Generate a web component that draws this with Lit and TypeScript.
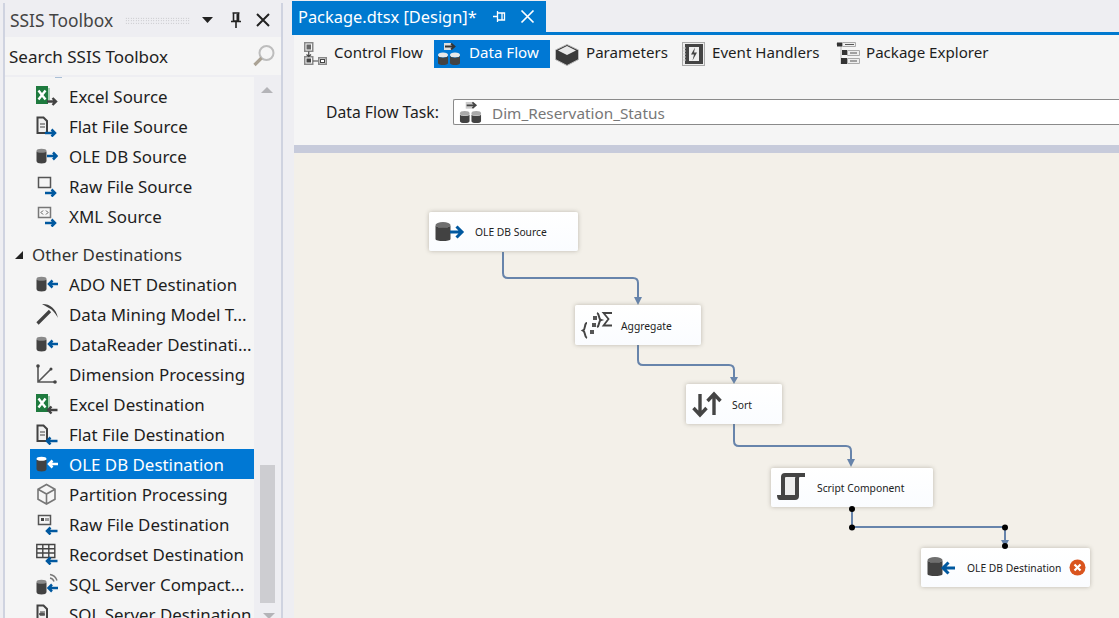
import { LitElement, html, css, svg } from "lit";
import { customElement } from "lit/decorators.js";

const DK = "#424242";
const BL = "#00589f";

const arrowL = (c = BL) => svg`<path d="M22 11H13M16.500 7.500L13 11l3.500 3.500" fill="none" stroke="${c}" stroke-width="2.500"/>`;
const arrowRlow = svg`<path d="M9 18h10M15.500 14.500L19 18l-3.500 3.500" fill="none" stroke="${BL}" stroke-width="2.500"/>`;
const arrowLlow = svg`<path d="M21.500 18H11M14.500 14.500L11 18l3.500 3.500" fill="none" stroke="${BL}" stroke-width="2.500"/>`;
const cyl = (sel = false) => svg`<ellipse cx="5.500" cy="6" rx="5" ry="2.300" fill="${sel ? "#fff" : "#8a8a8a"}"/><path d="M.5 6.500V16c0 1.700 2.200 2.500 5 2.500s5-.8 5-2.500V6.500c-1 1.800-9 1.800-10 0z" fill="${DK}"/>`;
const excel = svg`<rect x="0" y="1" width="12" height="18" fill="#1e7a3e"/><path d="M2.500 5.500l7 9M9.500 5.500l-7 9" stroke="#fff" stroke-width="2.400"/><rect x="12" y="3" width="2" height="12" fill="#a9cfb4"/>`;
const flat = svg`<path d="M1.500 2.500h6l3.500 3.500v12H1.500z" fill="#f0f0f0" stroke="${DK}" stroke-width="2"/><path d="M4 9h5M4 12h5" stroke="${DK}" stroke-width="1.200"/>`;

const icons: Record<string, unknown> = {
  excelS: svg`${excel}<path d="M11 16.500h9M16.500 13l3.500 3.500-3.500 3.500" fill="none" stroke="${DK}" stroke-width="2.400"/>`,
  flatS: svg`${flat}${arrowRlow}`,
  oleS: svg`${cyl()}<path d="M11 11h9.500M17 7.500l3.500 3.500-3.500 3.500" fill="none" stroke="${BL}" stroke-width="2.500"/>`,
  rawS: svg`<path d="M2.500 2.500h12v10h-12z" fill="#f5f5f5" stroke="#555" stroke-width="1.500"/>${arrowRlow}`,
  xmlS: svg`<path d="M2.500 2.500h12v10h-12z" fill="#f5f5f5" stroke="#777" stroke-width="1.500"/><path d="M7 5.500l-2 2 2 2M10 5.500l2 2-2 2" fill="none" stroke="#555"/>${arrowRlow}`,
  ado: svg`${cyl()}${arrowL()}`,
  mine: svg`<path d="M1.500 20.500L14 8" stroke="${DK}" stroke-width="3.200"/><path d="M6 1c7-.5 14 4 16 14-1.500-3-5-8.500-10-10.500z" fill="${DK}"/>`,
  dim: svg`<path d="M2 3v16h17M2.500 18.500L15 6" fill="none" stroke="#555" stroke-width="1.600"/><circle cx="2" cy="3" r="1.800" fill="#444"/><circle cx="19" cy="19" r="1.800" fill="#444"/><circle cx="15" cy="6" r="1.500" fill="#444"/>`,
  excelD: svg`${excel}<path d="M21.500 17H12M15.500 13.500L12 17l3.500 3.500" fill="none" stroke="${DK}" stroke-width="2.400"/>`,
  flatD: svg`${flat}${arrowLlow}`,
  oleD: svg`${cyl(true)}<path d="M22 11H13M16.500 7.500L13 11l3.500 3.500" fill="none" stroke="#fff" stroke-width="2.500"/>`,
  part: svg`<path d="M10.500 1.500l8.500 4.700v10L10.500 21 2 16.200v-10zM2 6.200l8.500 4.800 8.500-4.800M10.500 11v10" fill="#f5f5f5" stroke="#777" stroke-width="1.600"/>`,
  rawD: svg`<path d="M2.500 2.500h12v9h-12z" fill="#f5f5f5" stroke="#555" stroke-width="1.500"/><path d="M5 5h3v3H5zM9.500 5h1v3h-1zM11.500 5h1v3h-1z" fill="#444"/>${arrowLlow}`,
  rec: svg`<path d="M.8 1.500h18v13H.8zM.8 5.800h18M.8 10h18M6.800 1.500v13M12.800 1.500v13" fill="#f5f5f5" stroke="#444" stroke-width="1.400"/>${arrowLlow}`,
  sqlC: svg`<g transform="translate(0 3)">${cyl()}</g><path d="M22 15H12.500M16 11.500L12.500 15l3.500 3.500" fill="none" stroke="${BL}" stroke-width="2.500"/><path d="M14 1.500a9 9 0 0 1 7 6M14 5a5 5 0 0 1 4 3.500" fill="none" stroke="#777" stroke-width="1.400"/>`,
  sqlD: svg`${flat}<ellipse cx="6" cy="11" rx="3" ry="1.500" fill="#555"/>`,
};

const ctrl = svg`<g fill="none" stroke="#888" stroke-width="1.500"><rect x="1.750" y=".75" width="8" height="8.500" fill="#f5f5f5"/><rect x="3.500" y="2.500" width="4.500" height="5" fill="#666" stroke="none"/><rect x="1.750" y="14.750" width="8" height="7.500" fill="#f5f5f5"/><rect x="3.500" y="16.500" width="4.500" height="4" fill="#444" stroke="none"/><rect x="15.750" y="15.750" width="7.500" height="6.500" fill="#f5f5f5"/><rect x="17.500" y="17.500" width="4" height="3" fill="#fff" stroke="#444" stroke-width="1"/><path d="M5.750 9.500v5M3.500 12.500l2.250 2 2.250-2M10 19h5" stroke="#444" stroke-width="1.200"/></g>`;
const dflow = svg`<path d="M7 1h8v7H7z" fill="#ddd"/><path d="M8 4.500h9M14 1.500l3.500 3-3.500 3" fill="none" stroke="#333" stroke-width="1.800"/><ellipse cx="6" cy="13" rx="5" ry="2.500" fill="#e8e8e8"/><path d="M1 14v7c0 2.700 10 2.700 10 0v-7c-1 2.200-9 2.200-10 0z" fill="${DK}"/><ellipse cx="18" cy="13" rx="5" ry="2.500" fill="#e8e8e8"/><path d="M13 14v7c0 2.700 10 2.700 10 0v-7c-1 2.200-9 2.200-10 0z" fill="${DK}"/>`;
const dtask = svg`<path d="M7 1h8v7H7z" fill="#ccc"/><path d="M8 4.500h9M14 1.500l3.500 3-3.500 3" fill="none" stroke="#444" stroke-width="1.800"/><ellipse cx="6" cy="13" rx="5" ry="2.500" fill="#aaa"/><path d="M1 14v7c0 2.700 10 2.700 10 0v-7c-1 2.200-9 2.200-10 0z" fill="${DK}"/><ellipse cx="18" cy="13" rx="5" ry="2.500" fill="#aaa"/><path d="M13 14v7c0 2.700 10 2.700 10 0v-7c-1 2.200-9 2.200-10 0z" fill="${DK}"/>`;
const params = svg`<path d="M12 2.500l11.500 5.500v9.500L12 23.500.5 17.500V8z" fill="#3a3a3a" stroke="#bbb"/><path d="M12 4L21 8.500 12 13 3 8.500z" fill="#e8e8e8"/>`;
const evt = svg`<rect x=".5" y=".5" width="22" height="23" fill="#eee" stroke="#aaa"/><rect x="3" y="2" width="18" height="20" fill="#444"/><rect x="7" y="5" width="10" height="14" fill="#eee"/><path d="M13 5.500L9 12.500h3l-1.500 6 4.500-8h-3z" fill="#444"/><path d="M1 6h3M1 9h3M1 12h3M1 15h3M1 18h3" stroke="#ccc"/>`;
const expl = svg`<path d="M0 2h6M5 2v20" stroke="#bbb" fill="none"/><rect x="1" y=".5" width="5" height="4" fill="#333"/><path d="M6.500 .5h13v4h-13z" fill="#eee" stroke="#aaa"/><path d="M9 2.500h9" stroke="#555"/><rect x="6" y="8" width="5" height="5" fill="#333"/><path d="M11.500 8.500h12v5h-12z" fill="#eee" stroke="#aaa"/><path d="M14 11h7" stroke="#555"/><rect x="5" y="16" width="6" height="6" fill="#333"/><path d="M11.500 16.500h12v5h-12z" fill="#eee" stroke="#aaa"/><path d="M14 19h7" stroke="#555"/>`;

const group1 = [["excelS", "Excel Source"], ["flatS", "Flat File Source"], ["oleS", "OLE DB Source"], ["rawS", "Raw File Source"], ["xmlS", "XML Source"]];
const group2 = [["ado", "ADO NET Destination"], ["mine", "Data Mining Model T..."], ["ado", "DataReader Destinati..."], ["dim", "Dimension Processing"], ["excelD", "Excel Destination"], ["flatD", "Flat File Destination"], ["oleD", "OLE DB Destination"], ["part", "Partition Processing"], ["rawD", "Raw File Destination"], ["rec", "Recordset Destination"], ["sqlC", "SQL Server Compact..."], ["sqlD", "SQL Server Destination"]];

const nodes = [
  { x: 429, y: 212, w: 149, h: 39, t: 13, label: "OLE DB Source", ic: svg`<ellipse cx="9" cy="8" rx="7.500" ry="3" fill="#6f6f6f"/><path d="M1.500 8.500V22c0 2.700 15 2.700 15 0V8.500c-2 3-13 3-15 0z" fill="${DK}"/><path d="M16 15h12M22.500 9.500L28 15l-5.500 5.500" fill="none" stroke="#00589f" stroke-width="3"/>`, err: false },
  { x: 575, y: 305, w: 126, h: 40, t: 14, label: "Aggregate", ic: svg`<path d="M7 13c-3 0-1 6-4 7.500 3 1.500 1 6.500 4 7.500M17 3c3 1 1 6 4 7-3 1-1 6-4 7" fill="none" stroke="#444" stroke-width="2"/><rect x="13" y="6" width="4" height="4" fill="#555"/><rect x="12" y="13" width="4" height="4" fill="#555"/><rect x="10" y="20" width="4" height="4" fill="#555"/><path d="M32 3H23.500l5 6-5 6.500H32" fill="none" stroke="#444" stroke-width="1.800"/>`, err: false },
  { x: 686, y: 384, w: 96, h: 40, t: 14, label: "Sort", ic: svg`<path d="M9 5v21M2.500 19l6.500 7 6.500-7M23 26V5M16.500 12L23 5l6.500 7" fill="none" stroke="#444" stroke-width="3.400"/>`, err: false },
  { x: 771, y: 468, w: 162, h: 39, t: 13, label: "Script Component", ic: svg`<path d="M7 3h16v20H7z" fill="#eee"/><path d="M5 22V4q0-4 4-4h20v4h-5q-1 0-1 1v18q0 4-4 4H4q-3 0-3-5zM9 5v17h10V5q0-1 1-1H10q-1 0-1 1z" fill="#444" fill-rule="evenodd"/>`, err: false },
  { x: 921, y: 548, w: 169, h: 39, t: 13, label: "OLE DB Destination", ic: svg`<ellipse cx="9" cy="7" rx="7.500" ry="3" fill="#6f6f6f"/><path d="M1.500 7.500V21c0 2.700 15 2.700 15 0V7.500c-2 3-13 3-15 0z" fill="${DK}"/><path d="M29 15H17M22.500 9.500L17 15l5.500 5.500" fill="none" stroke="#00589f" stroke-width="3"/>`, err: true },
];

@customElement("app-root")
export class AppRoot extends LitElement {
  static styles = css`
    :host { display: block; width: 1119px; height: 618px; overflow: hidden; background: #eeeef2; font-family: "Noto Sans", "Open Sans", sans-serif; color: #1e1e1e; }
    .page { display: grid; grid-template-columns: 283px 10px 1fr; height: 618px; }
    .panel { margin: 3px 0 0 3px; border: solid #cfd3e0; border-width: 0 2px; display: flex; flex-direction: column; overflow: hidden; height: 615px; box-sizing: border-box; position: relative; }
    .cap { height: 34px; display: flex; align-items: center; padding-left: 5px; flex: none; }
    .cap .t { font-size: 17.400px; color: #444; width: 115px; white-space: nowrap; }
    .grip { width: 65px; height: 7px; background-image: radial-gradient(#b4b4b8 .7px, transparent .8px); background-size: 2.500px 2.500px; }
    .cap svg { flex: none; }
    .cap .dd { margin-left: 12px; }
    .cap .pin { margin-left: 17px; }
    .cap .x { margin-left: 14px; }
    .search { height: 38px; background: #f5f5f5; display: flex; align-items: center; justify-content: space-between; padding: 0 6px 0 4px; font-size: 17px; color: #222; flex: none; margin-bottom: 2px; white-space: nowrap; }
    .body { flex: 1; display: grid; grid-template-columns: 249px 1fr; background: #f5f5f5; min-height: 0; position: relative; }
    .sliver { position: absolute; left: 50px; top: 0; width: 7px; height: 1px; background: #a9bfd6; }
    .list { padding: 4px 0 0 25px; overflow: hidden; }
    .row { height: 30px; box-sizing: border-box; display: flex; align-items: center; font-size: 16.900px; padding: 1px 0 0 6px; color: #1e1e1e; white-space: nowrap; }
    .row svg { width: 22px; height: 22px; flex: none; margin-right: 11px; margin-top: -1px; }
    .row.sel { background: #0078d4; color: #fff; }
    .head { height: 30px; box-sizing: border-box; margin: 8px 0 0 -25px; padding: 1px 0 0 9px; display: flex; align-items: center; font-size: 16.900px; color: #333; }
    .head svg { margin-right: 8px; }
    .bar { background: #eeeef2; position: relative; }
    .up { width: 0; height: 0; border: 6px solid transparent; border-top: 0; border-bottom-color: #b4b4b8; margin: 10px 0 0 7px; }
    .down { position: absolute; left: 9px; bottom: -1px; width: 0; height: 0; border: 6px solid transparent; border-bottom: 0; border-top-color: #b4b4b8; }
    .thumb { position: absolute; left: 6px; top: 388px; width: 15px; height: 138px; background: #cdcdd1; }
    .main { display: flex; flex-direction: column; height: 618px; min-width: 0; margin-left: -1px; }
    .tabs { height: 32px; padding-top: 1px; box-sizing: border-box; flex: none; }
    .tab { width: 254px; height: 31px; background: #0079cf; color: #fff; display: flex; align-items: center; padding-left: 6px; box-sizing: border-box; font-size: 16.400px; white-space: nowrap; }
    .tab .n { width: 178px; flex: none; }
    .tab .p { margin-left: 17px; flex: none; }
    .tab .c { margin-left: 14px; flex: none; }
    .line { height: 3px; background: #0079cf; flex: none; }
    .tool { background: #f5f5f5; height: 110px; flex: none; margin-left: 2px; }
    .btns { display: flex; height: 28px; margin-top: 5px; padding-left: 4px; }
    .btn { display: flex; align-items: center; font-size: 15.100px; white-space: nowrap; height: 28px; padding-left: 5px; box-sizing: border-box; flex: none; }
    .btn span { position: relative; top: -2px; }
    .btn svg { width: 24px; height: 24px; flex: none; margin-right: 7px; }
    .btn.on { background: #0078d4; color: #fff; }
    .b1 { width: 136px; }
    .b2 { width: 116px; margin-right: 1px; padding-left: 3px; }
    .b2 svg { margin-right: 8px; }
    .b3 { width: 126px; padding-left: 4px; }
    .b4 { width: 154px; }
    .b4 svg { margin-right: 6px; }
    .b5 svg { margin-right: 6px; }
    .task { display: flex; align-items: center; margin-top: 31px; padding-left: 32px; white-space: nowrap; }
    .task label { font-size: 15.700px; width: 127px; flex: none; }
    .input { flex: 1; height: 26px; border: 1px solid #8a8a8a; border-right: 0; background: #fff; box-sizing: border-box; display: flex; align-items: center; padding: 1px 0 0 5px; color: #777; font-size: 15.300px; border-radius: 2px 0 0 2px; }
    .input svg { width: 23px; height: 23px; margin-right: 10px; margin-top: -1px; }
    .sep { height: 8px; background: #c7cbdb; flex: none; margin-left: 2px; }
    .canvas { flex: 1; background: #f3f0e9; margin-left: 2px; }
    .diagram { position: absolute; left: 0; top: 0; pointer-events: none; width: 1119px; height: 618px; }
    .node { position: absolute; background: linear-gradient(#fff, #fafcff); border-radius: 2px; box-shadow: 0 0 4px rgba(120,115,100,.45); box-sizing: border-box; font-size: 10.300px; color: #222; white-space: nowrap; }
    .node .ic { position: absolute; left: 5px; top: 5px; width: 40px; height: 30px; }
    .node .lb { position: absolute; left: 46px; }
    .node .err { position: absolute; right: 4px; top: 11px; width: 17px; height: 17px; }
  `;

  private row(r: string[], sel = false) {
    return html`<div class="row ${sel ? "sel" : ""}"><svg viewBox="0 0 22 22">${icons[r[0]]}</svg>${r[1]}</div>`;
  }

  render() {
    return html`
      <div class="page">
        <div class="panel">
          <div class="cap">
            <span class="t">SSIS Toolbox</span>
            <span class="grip"></span>
            <svg class="dd" width="11" height="6" viewBox="0 0 11 6"><path d="M0 0h11L5.500 6z" fill="#222"/></svg>
            <svg class="pin" width="12" height="16" viewBox="0 0 12 16"><path d="M2.500 1h7M3.500 1v8h5V1M1 9.500h10M6 10v6" fill="none" stroke="#222" stroke-width="1.600"/><path d="M6.500 2h2v7h-2z" fill="#222"/></svg>
            <svg class="x" width="14" height="14" viewBox="0 0 14 14"><path d="M1 1l12 12M13 1L1 13" stroke="#222" stroke-width="2"/></svg>
          </div>
          <div class="search">
            <span>Search SSIS Toolbox</span>
            <svg width="22" height="22" viewBox="0 0 22 22"><circle cx="13.500" cy="8" r="7" fill="none" stroke="#bdbdbd" stroke-width="2"/><path d="M8.500 13L1.500 20" stroke="#aaa294" stroke-width="3.200"/></svg>
          </div>
          <div class="body">
            <div class="sliver"></div>
            <div class="list">
              ${group1.map((r) => this.row(r))}
              <div class="head"><svg width="10" height="10" viewBox="0 0 10 10"><path d="M9 1v8H1z" fill="#222"/></svg>Other Destinations</div>
              ${group2.map((r) => this.row(r, r[1] === "OLE DB Destination"))}
            </div>
            <div class="bar"><div class="up"></div><div class="thumb"></div><div class="down"></div></div>
          </div>
        </div>
        <div></div>
        <div class="main">
          <div class="tabs">
            <div class="tab">
              <span class="n">Package.dtsx [Design]*</span>
              <svg class="p" width="13" height="13" viewBox="0 0 13 13"><path d="M0 6.500h4M4.500 1v11M4.500 3h7v7h-7M9 3v7" fill="none" stroke="#fff" stroke-width="1.300"/></svg>
              <svg class="c" width="15" height="15" viewBox="0 0 15 15"><path d="M1.500 1.500l12 12M13.500 1.500l-12 12" stroke="#fff" stroke-width="1.700"/></svg>
            </div>
          </div>
          <div class="line"></div>
          <div class="tool">
            <div class="btns">
              <div class="btn b1"><svg viewBox="0 0 24 24">${ctrl}</svg><span>Control Flow</span></div>
              <div class="btn b2 on"><svg viewBox="0 0 24 24">${dflow}</svg><span>Data Flow</span></div>
              <div class="btn b3"><svg viewBox="0 0 24 24">${params}</svg><span>Parameters</span></div>
              <div class="btn b4"><svg viewBox="0 0 24 24">${evt}</svg><span>Event Handlers</span></div>
              <div class="btn b5"><svg viewBox="0 0 24 24">${expl}</svg><span>Package Explorer</span></div>
            </div>
            <div class="task">
              <label>Data Flow Task:</label>
              <div class="input"><svg viewBox="0 0 24 24">${dtask}</svg>Dim_Reservation_Status</div>
            </div>
          </div>
          <div class="sep"></div>
          <div class="canvas"></div>
        </div>
      </div>
      <svg class="diagram" viewBox="0 0 1119 618">
        <g fill="none" stroke="#6784ab" stroke-width="2">
          <path d="M503 252V273q0 5 5 5H633q5 0 5 5V300"/>
          <path d="M638 345V360q0 5 5 5H729q5 0 5 5V378"/>
          <path d="M734 424V441q0 5 5 5H846q5 0 5 5V461"/>
          <path d="M852 507V527H1005V542"/>
        </g>
        <g fill="#6784ab">
          <path d="M634 297h8l-4 8z"/><path d="M730 377h8l-4 7z"/><path d="M847 459h8l-4 8z"/><path d="M1001 540h8l-4 7z"/>
        </g>
      </svg>
      ${nodes.map((n) => html`
        <div class="node" style="left:${n.x}px;top:${n.y}px;width:${n.w}px;height:${n.h}px">
          <svg class="ic" viewBox="0 0 40 30">${n.ic}</svg>
          <span class="lb" style="top:${n.t}px">${n.label}</span>
          ${n.err ? html`<svg class="err" viewBox="0 0 17 17"><circle cx="8.500" cy="8.500" r="8" fill="#d9541e"/><path d="M5.500 5.500l6 6M11.500 5.500l-6 6" stroke="#fff" stroke-width="2.200"/></svg>` : ""}
        </div>`)}
      <svg class="diagram" viewBox="0 0 1119 618">
        <circle cx="852" cy="509" r="3" fill="#000"/><circle cx="852" cy="527.500" r="3" fill="#000"/><circle cx="1005" cy="527.500" r="3" fill="#000"/><circle cx="1005" cy="546" r="3" fill="#000"/>
      </svg>
    `;
  }
}
